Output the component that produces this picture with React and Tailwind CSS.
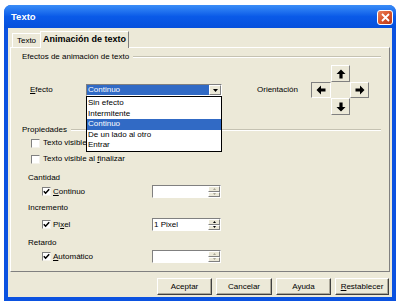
import React from "react";

function Arrow({ rot }) {
  return (
    <svg width="10" height="10" viewBox="0 0 10 10" className={rot}>
      <polygon points="5,0.5 9.5,5 6.6,5 6.6,9.5 3.4,9.5 3.4,5 0.5,5" fill="#000" />
    </svg>
  );
}

function Check({ checked }) {
  return (
    <span className="w-[9px] h-[9px] shrink-0 bg-white border border-t-[#808080] border-l-[#808080] border-r-[#f4f2ea] border-b-[#f4f2ea] flex items-center justify-center">
      {checked && (
        <svg width="7" height="7" viewBox="0 0 7 7">
          <polyline points="0.8,3.2 2.6,5.2 6.2,1.2" fill="none" stroke="#000" strokeWidth="1.5" />
        </svg>
      )}
    </span>
  );
}

function SpinBtn({ up, enabled }) {
  return (
    <div className="flex-1 bg-[#ece9d8] border border-t-white border-l-white border-r-[#808080] border-b-[#808080] flex items-center justify-center">
      <svg width="3" height="2" viewBox="0 0 3 2">
        <polygon points={up ? "1.5,0 3,2 0,2" : "0,0 3,0 1.5,2"} fill={enabled ? "#000" : "#a7a595"} />
      </svg>
    </div>
  );
}

function Spin({ value, enabled }) {
  return (
    <div className="w-[69px] h-[13px] flex bg-white border border-t-[#808080] border-l-[#808080] border-r-white border-b-white">
      <div className="flex-1 pl-[1px] leading-[11px] whitespace-nowrap">{value}</div>
      <div className="w-[12px] flex flex-col">
        <SpinBtn up enabled={enabled} />
        <SpinBtn enabled={enabled} />
      </div>
    </div>
  );
}

function Sep({ children }) {
  return (
    <div className="h-[10px] flex items-center pl-[11px] pr-[8px]">
      <span className="leading-[10px] whitespace-nowrap">{children}</span>
      <div className="flex-1 ml-[4px] border-t border-t-[#c5c2b2] border-b border-b-white" />
    </div>
  );
}

function OBtn({ children, pressed }) {
  return (
    <div
      className={
        pressed
          ? "flex items-center justify-center bg-[#ece9d8] border border-t-[#808080] border-l-[#808080] border-r-white border-b-white"
          : "flex items-center justify-center bg-[#ece9d8] border border-t-white border-l-white border-r-[#808080] border-b-[#808080]"
      }
    >
      {children}
    </div>
  );
}

function Btn({ children, w }) {
  return (
    <div className={w + " h-[17px] flex items-center justify-center bg-[#ece9d8] border border-t-white border-l-white border-r-[#404040] border-b-[#404040] shadow-[inset_-1px_-1px_0_#aca899] leading-[10px]"}>
      {children}
    </div>
  );
}

export default function App() {
  const items = ["Sin efecto", "Intermitente", "Continuo", "De un lado al otro", "Entrar"];
  return (
    <div className="w-[396px] h-[302px] bg-white overflow-hidden pt-[5px] pl-[4px] font-['Liberation_Sans',Arial,sans-serif] text-[8px] text-black">
      <div className="w-[392px] h-[296px] flex flex-col rounded-t-[7px] overflow-hidden bg-[#0b52e0]">
        {/* Title bar */}
        <div className="h-[23px] shrink-0 flex items-center justify-between pl-[7px] pr-[3px] bg-gradient-to-b from-[#3a8df7] via-[#0a5ae8] to-[#0650dc]">
          <span className="text-white font-bold text-[9.5px] leading-[12px] pt-[1px]">Texto</span>
          <div className="w-[16px] h-[15px] mt-[1px] rounded-[3px] border border-white bg-gradient-to-br from-[#e9835c] via-[#d9542a] to-[#b9381a] flex items-center justify-center">
            <svg width="9" height="9" viewBox="0 0 9 9">
              <path d="M1 1 L8 8 M8 1 L1 8" stroke="#fff" strokeWidth="1.8" />
            </svg>
          </div>
        </div>
        {/* Body */}
        <div className="flex-1 mx-[4px] mb-[4px] bg-[#ece9d8] flex flex-col pl-[2px] pr-[2px]">
          {/* Tabs */}
          <div className="h-[19px] shrink-0 flex items-end pl-[2px]">
            <div className="w-[28px] h-[14px] flex items-center justify-center border-t border-l border-t-white border-l-white leading-[10px]">
              Texto
            </div>
            <div className="relative z-10 w-[89px] h-[17px] -mb-[1px] bg-[#ece9d8] flex items-center justify-center border-t border-l border-r border-t-white border-l-white border-r-[#808080] font-bold text-[9px] leading-[11px] pb-[1px]">
              Animación de texto
            </div>
          </div>
          {/* Panel */}
          <div className="h-[225px] shrink-0 flex flex-col border border-t-white border-l-white border-r-[#808080] border-b-[#808080]">
            <div className="mt-[4px]">
              <Sep>Efectos de animación de texto</Sep>
            </div>
            <div className="mt-[3px] h-[50px] flex items-center pl-[19px]">
              <span className="w-[56px] leading-[10px]">
                <span className="underline">E</span>fecto
              </span>
              <div className="relative w-[136px] h-[12px] flex bg-white border border-t-[#808080] border-l-[#808080] border-r-white border-b-white">
                <div className="flex-1 bg-[#316ac5] text-white leading-[10px] pl-[1px]">Continuo</div>
                <div className="w-[12px] bg-[#ece9d8] border border-t-white border-l-white border-r-[#808080] border-b-[#808080] flex items-center justify-center">
                  <svg width="5" height="3" viewBox="0 0 5 3">
                    <polygon points="0,0 5,0 2.5,3" fill="#000" />
                  </svg>
                </div>
                <div className="absolute z-20 -left-[1px] top-[11px] w-[136px] h-[56px] bg-white border border-black py-[1px]">
                  {items.map((it, i) => (
                    <div
                      key={it}
                      className={
                        i === 2
                          ? "h-[10.5px] leading-[10.5px] pl-[1px] bg-[#316ac5] text-white"
                          : "h-[10.5px] leading-[10.5px] pl-[1px]"
                      }
                    >
                      {it}
                    </div>
                  ))}
                </div>
              </div>
              <span className="ml-[35px] w-[54px] leading-[10px]">Orientación</span>
              <div className="grid grid-cols-[20px_19px_19px] grid-rows-[17px_16px_17px]">
                <div />
                <OBtn>
                  <Arrow rot="" />
                </OBtn>
                <div />
                <OBtn pressed>
                  <Arrow rot="-rotate-90" />
                </OBtn>
                <div />
                <OBtn>
                  <Arrow rot="rotate-90" />
                </OBtn>
                <div />
                <OBtn>
                  <Arrow rot="rotate-180" />
                </OBtn>
                <div />
              </div>
            </div>
            <div className="mt-[10px]">
              <Sep>Propiedades</Sep>
            </div>
            <div className="mt-[3px] h-[10px] flex items-center pl-[20px] gap-[3px]">
              <Check />
              <span className="w-[43px] overflow-hidden whitespace-nowrap leading-[10px]">Texto visible al iniciar</span>
            </div>
            <div className="mt-[6px] h-[10px] flex items-center pl-[20px] gap-[3px]">
              <Check />
              <span className="leading-[10px]">
                Texto visible al <span className="underline">f</span>inalizar
              </span>
            </div>
            <div className="mt-[9px] h-[10px] flex items-center pl-[17px] leading-[10px]">Cantidad</div>
            <div className="mt-[2px] h-[13px] flex items-center pl-[31px]">
              <div className="w-[110px] flex items-center gap-[2px]">
                <Check checked />
                <span className="leading-[10px]">
                  <span className="underline">C</span>ontinuo
                </span>
              </div>
              <Spin value="" />
            </div>
            <div className="mt-[5px] h-[10px] flex items-center pl-[17px] leading-[10px]">Incremento</div>
            <div className="mt-[5px] h-[13px] flex items-center pl-[31px]">
              <div className="w-[110px] flex items-center gap-[2px]">
                <Check checked />
                <span className="leading-[10px]">
                  Pi<span className="underline">x</span>el
                </span>
              </div>
              <Spin value="1 Pixel" enabled />
            </div>
            <div className="mt-[7px] h-[10px] flex items-center pl-[17px] leading-[10px]">Retardo</div>
            <div className="mt-[2px] h-[13px] flex items-center pl-[31px]">
              <div className="w-[110px] flex items-center gap-[2px]">
                <Check checked />
                <span className="leading-[10px]">
                  <span className="underline">A</span>utomático
                </span>
              </div>
              <Spin value="" />
            </div>
          </div>
          {/* Buttons */}
          <div className="mt-[6px] flex justify-end gap-[4px] pr-[1px]">
            <Btn w="w-[55px]">Aceptar</Btn>
            <Btn w="w-[56px]">Cancelar</Btn>
            <Btn w="w-[55px]">Ayuda</Btn>
            <Btn w="w-[54px]">
              <span>
                <span className="underline">R</span>establecer
              </span>
            </Btn>
          </div>
        </div>
      </div>
    </div>
  );
}
